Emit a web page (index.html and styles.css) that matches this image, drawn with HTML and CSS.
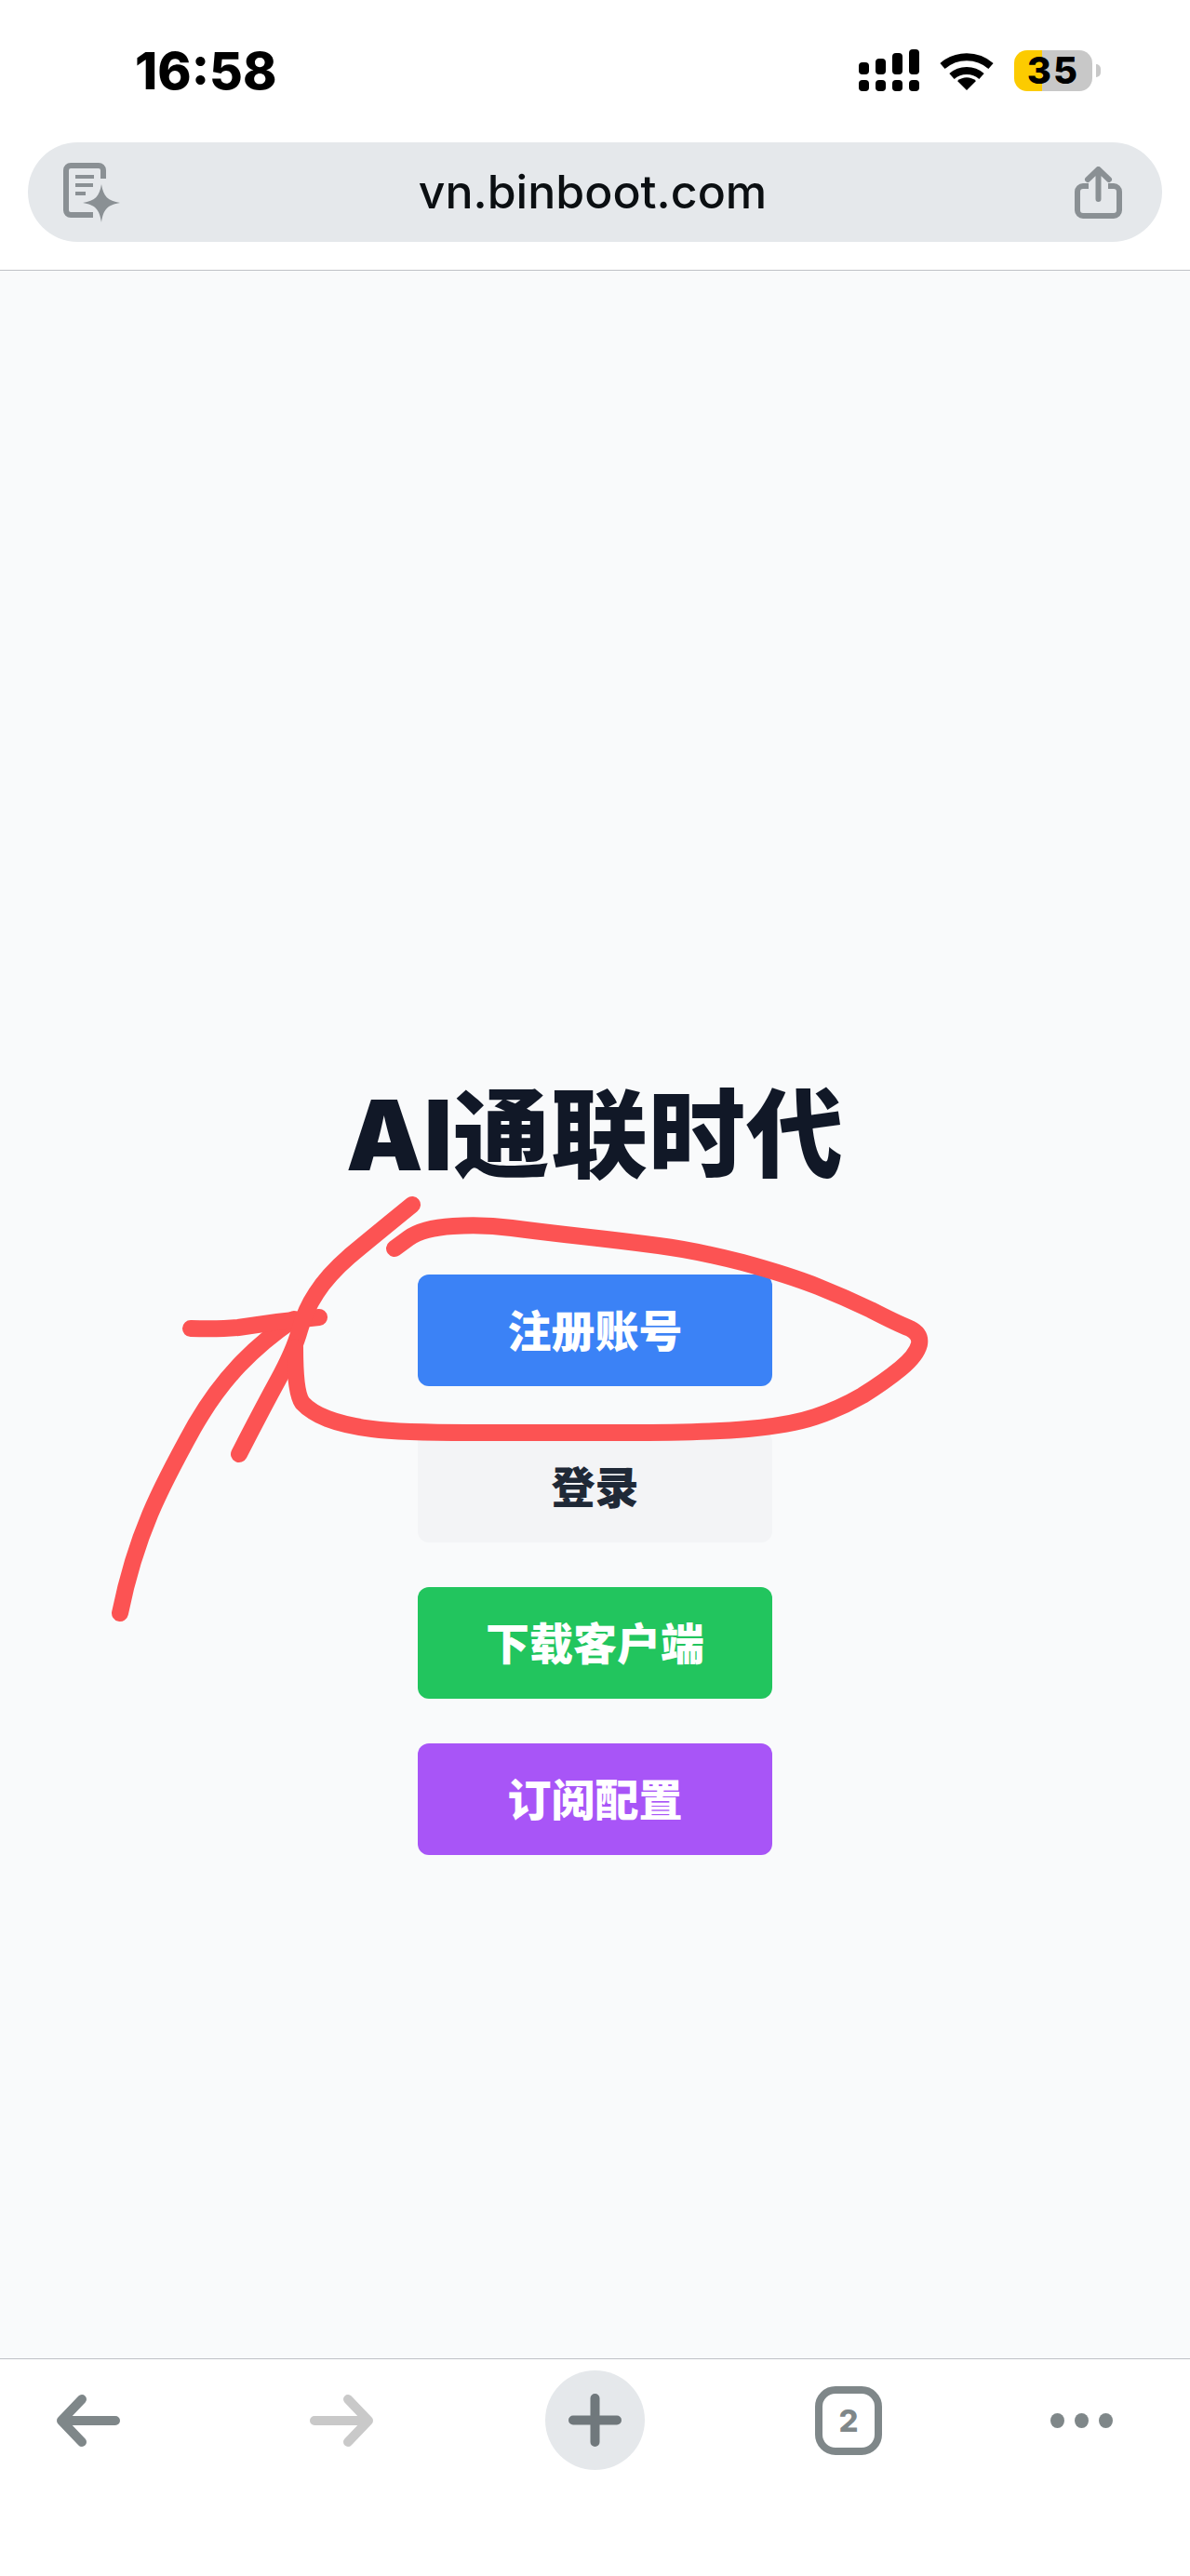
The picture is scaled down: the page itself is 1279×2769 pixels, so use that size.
FILE: index.html
```html
<!DOCTYPE html>
<html lang="zh-CN">
<head>
    <meta charset="UTF-8">
    <meta name="viewport" content="width=device-width, initial-scale=1.0">
    <title>AI通联时代</title>
    <link rel="stylesheet" href="styles.css">
</head>
<body>
    <header class="browser-top">
        <div class="status-bar">
            <span class="clock">16:58</span>
            <div class="status-icons">
                <svg class="signal" viewBox="0 0 65 45">
                    <rect x="0" y="14" width="11" height="13" rx="4"/>
                    <rect x="18" y="10" width="11" height="17" rx="4"/>
                    <rect x="36" y="4" width="11" height="23" rx="4"/>
                    <rect x="54" y="0" width="11" height="27" rx="4"/>
                    <rect x="0" y="33" width="11" height="12" rx="4"/>
                    <rect x="18" y="33" width="11" height="12" rx="4"/>
                    <rect x="36" y="33" width="11" height="12" rx="4"/>
                    <rect x="54" y="33" width="11" height="12" rx="4"/>
                </svg>
                <svg class="wifi" viewBox="0 0 58 42">
                    <path d="M3 16C18 3 40 3 55 16" fill="none" stroke="#000" stroke-width="8"/>
                    <path d="M13 27C22 19 36 19 45 27" fill="none" stroke="#000" stroke-width="8"/>
                    <path d="M29 42L19 32C25 27 33 27 39 32Z"/>
                </svg>
                <div class="battery">
                    <span class="battery-level">35</span>
                    <span class="battery-nub"></span>
                </div>
            </div>
        </div>

        <div class="address-bar">
            <svg class="doc-icon" viewBox="0 0 61 64">
                <path d="M43 17V8a5 5 0 0 0-5-5H8a5 5 0 0 0-5 5v43a5 5 0 0 0 5 5h24" fill="none" stroke="#8a9094" stroke-width="6"/>
                <rect x="13" y="13" width="20" height="4" fill="#8a9094"/>
                <rect x="13" y="22" width="19" height="4" fill="#8a9094"/>
                <rect x="13" y="31" width="11" height="4" fill="#8a9094"/>
                <path d="M41 23C43 36 48 41 61 43C48 45 43 50 41 64C39 50 34 45 21 43C34 41 39 36 41 23Z" fill="#8a9094"/>
            </svg>
            <span class="url">vn.binboot.com</span>
            <svg class="share-icon" viewBox="0 0 51 56">
                <path d="M15 21H9a6 6 0 0 0-6 6v20a6 6 0 0 0 6 6h33a6 6 0 0 0 6-6V27a6 6 0 0 0-6-6h-6" fill="none" stroke="#8a9094" stroke-width="6"/>
                <path d="M25.5 35V4M14 14L25.5 3L37 14" fill="none" stroke="#8a9094" stroke-width="6" stroke-linecap="round" stroke-linejoin="round"/>
            </svg>
        </div>
    </header>

    <main class="content">
        <h1 class="title">AI通联时代</h1>
        <div class="actions">
            <a class="btn btn-blue" href="#">注册账号</a>
            <a class="btn btn-light" href="#">登录</a>
            <a class="btn btn-green" href="#">下载客户端</a>
            <a class="btn btn-purple" href="#">订阅配置</a>
        </div>
    </main>

    <footer class="browser-nav">
        <svg class="nav-arrow" viewBox="0 0 68 56">
            <path d="M5 28H63M27 5L5 28L27 51" fill="none" stroke="#7f8789" stroke-width="10" stroke-linecap="round" stroke-linejoin="round"/>
        </svg>
        <svg class="nav-arrow nav-forward" viewBox="0 0 68 56">
            <path d="M5 28H63M41 5L63 28L41 51" fill="none" stroke="#c9c9c9" stroke-width="10" stroke-linecap="round" stroke-linejoin="round"/>
        </svg>
        <div class="new-tab">
            <svg class="plus" viewBox="0 0 57 57">
                <path d="M5 28.5H52M28.5 5V52" fill="none" stroke="#70787c" stroke-width="10" stroke-linecap="round"/>
            </svg>
        </div>
        <div class="tab-count">2</div>
        <div class="more-dots">
            <span class="dot"></span>
            <span class="dot"></span>
            <span class="dot"></span>
        </div>
    </footer>

    <!-- red marker scribble drawn over the page -->
    <svg class="scribble" viewBox="0 0 1279 2769">
        <path d="M129 1734C146 1650 172 1600 208 1535C238 1482 272 1448 316 1418"/>
        <path d="M205 1428Q235 1429 256 1427Q300 1420 343 1416"/>
        <path d="M257 1563Q280 1518 298 1485Q316 1452 322 1430Q328 1408 340 1390Q352 1371 376 1350Q400 1330 443 1295"/>
        <path d="M424 1342L439 1331Q454 1320 487 1318Q520 1316 550 1320Q580 1324 625 1329Q670 1334 708 1339Q747 1344 798 1357Q849 1371 879 1383Q909 1395 936 1408Q963 1422 978 1428Q990 1434 988 1445Q985 1457 968 1471Q951 1485 927 1500Q903 1514 876 1523Q849 1532 804 1536Q759 1540 670 1540Q580 1540 505 1540Q430 1540 400 1536Q370 1532 352 1525Q334 1518 325 1508Q317 1497 317 1448"/>
    </svg>
</body>
</html>
```

FILE: styles.css
```css
html, body {
    margin: 0;
    padding: 0;
}

body {
    position: relative;
    display: flex;
    flex-direction: column;
    width: 1279px;
    height: 2769px;
    overflow: hidden;
    background-color: #f9fafb;
    font-family: "Liberation Sans", Arial, sans-serif;
}

.browser-top {
    height: 290px;
    background-color: white;
    border-bottom: 1px solid #bfc1c6;
}

.status-bar {
    display: flex;
    justify-content: space-between;
    align-items: center;
    height: 45px;
    padding: 53px 96px 55px 145px;
}

.clock {
    padding-top: 2px;
    font-family: Inter, sans-serif;
    font-size: 55px;
    font-weight: 800;
    line-height: 45px;
    color: #000;
}

.status-icons {
    display: flex;
    align-items: center;
    gap: 22px;
}

.signal {
    width: 65px;
    height: 45px;
}

.wifi {
    width: 58px;
    height: 42px;
}

.battery {
    display: flex;
    align-items: center;
    gap: 4px;
}

.battery-level {
    width: 84px;
    height: 44px;
    border-radius: 14px;
    background: linear-gradient(90deg, #fccb00 36%, #c8c8c8 36%);
    font-family: Inter, sans-serif;
    font-size: 40px;
    font-weight: 800;
    letter-spacing: 2px;
    line-height: 44px;
    text-align: center;
    color: #000;
}

.battery-nub {
    width: 5px;
    height: 14px;
    border-radius: 0 5px 5px 0;
    background-color: #c8c8c8;
}

.address-bar {
    display: grid;
    grid-template-columns: 1fr auto 1fr;
    align-items: center;
    height: 107px;
    margin: 0 30px;
    padding: 0 43px 0 38px;
    border-radius: 54px;
    background-color: #e5e8eb;
}

.doc-icon {
    width: 61px;
    height: 64px;
}

.share-icon {
    width: 51px;
    height: 56px;
    justify-self: end;
}

.url {
    padding-bottom: 2px;
    font-family: Inter, sans-serif;
    font-size: 50px;
    font-weight: 500;
    color: #0b0f12;
}

.content {
    flex: 1;
    display: flex;
    flex-direction: column;
    align-items: center;
    padding-top: 864px;
}

.title {
    margin: 0;
    font-family: Inter, "Noto Sans CJK SC", sans-serif;
    font-size: 104px;
    font-weight: 900;
    letter-spacing: 1px;
    line-height: 130px;
    color: #111827;
}

.actions {
    display: flex;
    flex-direction: column;
    gap: 48px;
    margin-top: 85px;
}

.btn {
    box-sizing: border-box;
    display: flex;
    justify-content: center;
    align-items: center;
    width: 381px;
    height: 120px;
    padding-bottom: 6px;
    border-radius: 12px;
    font-family: "Noto Sans CJK SC", sans-serif;
    font-size: 47px;
    font-weight: 900;
    text-decoration: none;
    color: white;
}

.btn-blue {
    background-color: #3b82f6;
}

.btn-light {
    background-color: #f3f4f6;
    color: #1f2937;
}

.btn-green {
    background-color: #22c55e;
}

.btn-purple {
    background-color: #a855f7;
}

.browser-nav {
    display: flex;
    align-items: center;
    height: 107px;
    padding: 12px 82px 114px 61px;
    background-color: white;
    border-top: 1px solid #bfc1c6;
}

.nav-arrow {
    width: 68px;
    height: 56px;
}

.nav-forward {
    margin-left: 204px;
}

.new-tab {
    display: flex;
    justify-content: center;
    align-items: center;
    width: 107px;
    height: 107px;
    margin-left: 185px;
    border-radius: 50%;
    background-color: #e5e8eb;
}

.plus {
    width: 57px;
    height: 57px;
}

.tab-count {
    box-sizing: border-box;
    width: 72px;
    height: 74px;
    margin-left: 183px;
    border: 8px solid #7f8789;
    border-radius: 22px;
    font-family: Inter, sans-serif;
    font-size: 33px;
    font-weight: 800;
    line-height: 58px;
    text-align: center;
    color: #7f8789;
}

.more-dots {
    display: flex;
    gap: 11px;
    margin-left: 181px;
}

.dot {
    width: 15px;
    height: 16px;
    border-radius: 50%;
    background-color: #7f8789;
}

.scribble {
    position: absolute;
    top: 0;
    left: 0;
    width: 1279px;
    height: 2769px;
    pointer-events: none;
}

.scribble path {
    fill: none;
    stroke: #fc5353;
    stroke-width: 18;
    stroke-linecap: round;
    stroke-linejoin: round;
}
```
